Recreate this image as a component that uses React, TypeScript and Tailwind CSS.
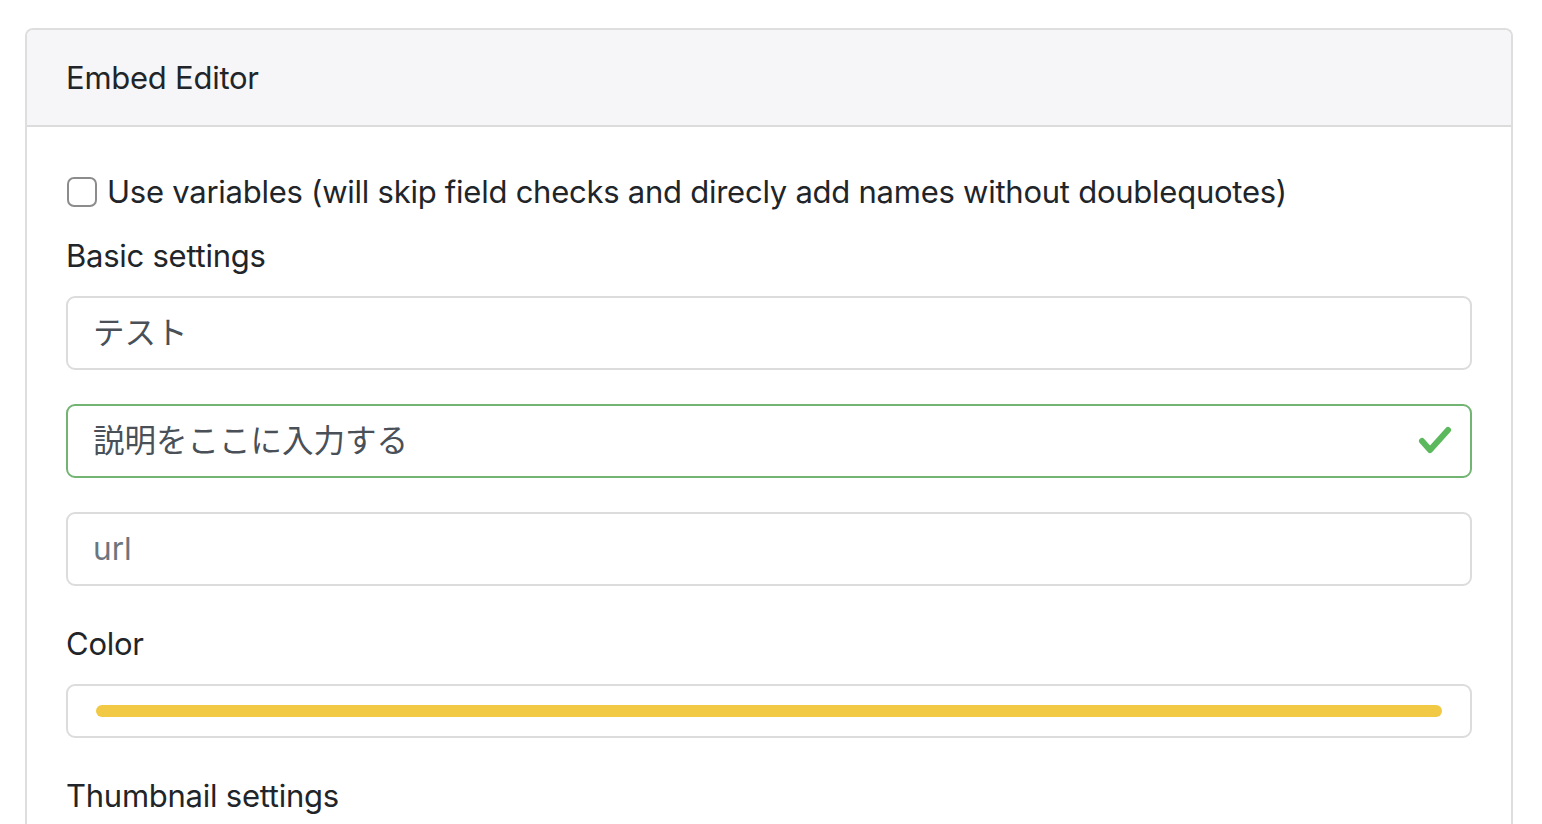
import React from 'react';

const FONT = "font-['Inter','Noto_Sans_CJK_JP',sans-serif]";

const TextField = ({ value, placeholder, valid }: { value?: string; placeholder?: string; valid?: boolean }) => (
    <div
        className={`flex items-center h-[74px] rounded-[9px] border-2 bg-white pl-[25px] pr-[17px] ${
            valid ? 'border-[#72b472]' : 'border-[#dcdcdc]'
        }`}
    >
        <span className={`flex-1 text-[31.5px] tracking-normal ${value ? 'text-[#495057]' : 'text-[#6c757d]'}`}>
            {value || placeholder}
        </span>
        {valid && (
            <svg width="36" height="30" viewBox="0 0 36 30" className="shrink-0">
                <polyline
                    points="5,15 13,24 31,4"
                    fill="none"
                    stroke="#5cb85c"
                    strokeWidth="6"
                    strokeLinecap="round"
                    strokeLinejoin="round"
                />
            </svg>
        )}
    </div>
);

export default function App() {
    return (
        <div className={`bg-white pl-[25px] pr-[29px] pt-[28px] ${FONT} text-[#212529] overflow-hidden h-[824px] tracking-[-0.25px]`}>
            <div className="border-2 border-[#dedede] rounded-t-[8px] border-b-0 h-[900px]">
                {/* Header */}
                <div className="h-[97px] flex items-center px-[39px] bg-[#f6f6f8] border-b-2 border-[#dcdcdc] rounded-t-[6px]">
                    <h2 className="text-[31px] leading-none">Embed Editor</h2>
                </div>

                {/* Body */}
                <div className="px-[39px] pt-[44px]">
                    <label className="flex items-center gap-[10px] h-[42px]">
                        <span className="block w-[30px] h-[30px] rounded-[7px] border-2 border-[#8c8c8c] bg-white ml-px" />
                        <span className="text-[31px]">Use variables (will skip field checks and direcly add names without doublequotes)</span>
                    </label>

                    <p className="text-[31px] leading-[42px] mt-[22px]">Basic settings</p>

                    <div className="flex flex-col gap-[34px] mt-[19px]">
                        <TextField value="テスト" />
                        <TextField value="説明をここに入力する" valid />
                        <TextField placeholder="url" />
                    </div>

                    <p className="text-[31px] leading-[42px] mt-[37px]">Color</p>

                    <div className="mt-[19px] h-[54px] rounded-[9px] border-2 border-[#dcdcdc] flex items-center px-[28px]">
                        <div className="h-[12px] w-full rounded-full bg-[#f1c944]" />
                    </div>

                    <p className="text-[31px] leading-[42px] mt-[37px]">Thumbnail settings</p>
                </div>
            </div>
        </div>
    );
}
